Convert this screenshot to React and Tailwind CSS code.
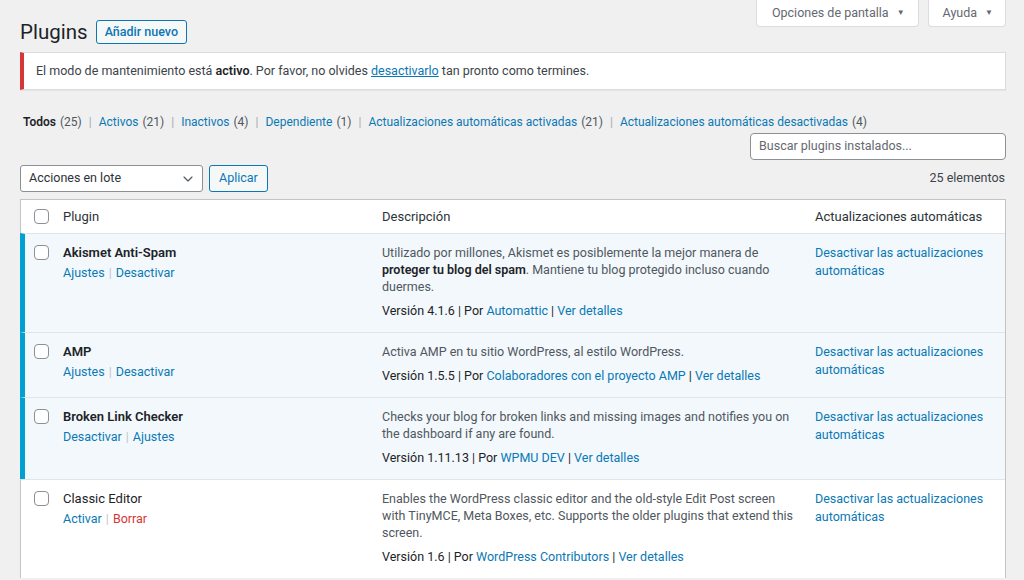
import { ChevronDown } from "lucide-react"

const LINK = "text-[#0a78b4]"

const filters = [
  { label: "Todos", count: 25, current: true },
  { label: "Activos", count: 21 },
  { label: "Inactivos", count: 4 },
  { label: "Dependiente", count: 1 },
  { label: "Actualizaciones automáticas activadas", count: 21 },
  { label: "Actualizaciones automáticas desactivadas", count: 4 },
]

const plugins = [
  {
    name: "Akismet Anti-Spam",
    active: true,
    actions: ["Ajustes", "Desactivar"],
    desc: (
      <>
        Utilizado por millones, Akismet es posiblemente la mejor manera de{" "}
        <strong className="font-semibold text-[#1d2327]">proteger tu blog del spam</strong>. Mantiene tu blog protegido
        incluso cuando duermes.
      </>
    ),
    version: "4.1.6",
    author: "Automattic",
  },
  {
    name: "AMP",
    active: true,
    actions: ["Ajustes", "Desactivar"],
    desc: "Activa AMP en tu sitio WordPress, al estilo WordPress.",
    version: "1.5.5",
    author: "Colaboradores con el proyecto AMP",
  },
  {
    name: "Broken Link Checker",
    active: true,
    actions: ["Desactivar", "Ajustes"],
    desc: "Checks your blog for broken links and missing images and notifies you on the dashboard if any are found.",
    version: "1.11.13",
    author: "WPMU DEV",
  },
  {
    name: "Classic Editor",
    active: false,
    actions: ["Activar", "Borrar"],
    desc: "Enables the WordPress classic editor and the old-style Edit Post screen with TinyMCE, Meta Boxes, etc. Supports the older plugins that extend this screen.",
    version: "1.6",
    author: "WordPress Contributors",
  },
]

function Checkbox() {
  return <span className="block w-[15px] h-[15px] rounded-[4px] border border-[#8c8f94] bg-white" />
}

function PluginRow({ p }) {
  return (
    <div
      className={`flex border-t border-t-[#e2e4e7] ${
        p.active ? "bg-[#f2f8fc] border-l-[5px] border-l-[#00a0d2]" : "bg-white border-l border-l-[#c3c4c7]"
      }`}
    >
      <div className={`${p.active ? "w-[37px] pl-[9px]" : "w-[41px] pl-[13px]"} shrink-0 pt-[11px]`}>
        <Checkbox />
      </div>
      <div className="w-[320px] shrink-0 pl-[1px] pt-[10px]">
        <div
          className={`text-[13px] leading-[17px] text-[#1d2327] ${p.active ? "font-semibold" : "font-normal"}`}
        >
          {p.name}
        </div>
        <div className="mt-[3px] text-[12.5px] leading-[17px] text-[#c3c4c7]">
          <span className={LINK}>{p.actions[0]}</span>
          <span className="mx-[4px]">|</span>
          <span className={p.actions[1] === "Borrar" ? "text-[#d63638]" : LINK}>{p.actions[1]}</span>
        </div>
      </div>
      <div className="w-[433px] shrink-0 pt-[10px] pb-[13px] pr-[20px] text-[12.5px] leading-[17px]">
        <div className="text-[#50575e]">{p.desc}</div>
        <div className="mt-[7px] text-[#1d2327]">
          Versión {p.version} | Por <span className={LINK}>{p.author}</span> |{" "}
          <span className={LINK}>Ver detalles</span>
        </div>
      </div>
      <div className={`flex-1 pt-[10px] pr-[10px] text-[12.5px] leading-[17.5px] ${LINK}`}>
        Desactivar las actualizaciones automáticas
      </div>
    </div>
  )
}

export default function App() {
  return (
    <div
      className="min-h-[580px] bg-[#f0f0f1] text-[12.5px] text-[#3c434a] pl-[20px] pr-[18px]"
      style={{ fontFamily: "Roboto, 'Noto Sans', sans-serif" }}
    >
      {/* screen meta tabs */}
      <div className="flex justify-end gap-[9px]">
        <div className="h-[27px] pl-[15px] pr-[13px] flex items-center gap-[8px] bg-white border border-t-0 border-[#dcdcde] rounded-b-[4px] text-[#646970] text-[12.5px]">
          Opciones de pantalla <span className="text-[8px]">▼</span>
        </div>
        <div className="h-[27px] pl-[14px] pr-[12px] flex items-center gap-[8px] bg-white border border-t-0 border-[#dcdcde] rounded-b-[4px] text-[#646970] text-[12.5px]">
          Ayuda <span className="text-[8px]">▼</span>
        </div>
      </div>

      <div className="flex items-center gap-[8px] -mt-[9px]">
        <h1 className="text-[20.5px] leading-[28px] text-[#1d2327] font-normal">Plugins</h1>
        <span className="h-[24px] px-[8px] flex items-center border border-[#0a78b4] rounded-[3px] text-[#0a78b4] text-[12.5px] font-medium bg-[#f6f7f7]">
          Añadir nuevo
        </span>
      </div>

      {/* notice */}
      <div className="mt-[6px] h-[38px] flex items-center bg-white border border-[#dcdcde] border-l-4 border-l-[#d63638] pl-[12px] text-[12.5px] text-[#3c434a] shadow-[0_1px_1px_rgba(0,0,0,0.04)]">
        <span>
          El modo de mantenimiento está <strong className="font-semibold text-[#1d2327]">activo</strong>. Por favor, no
          olvides <span className={`${LINK} underline`}>desactivarlo</span> tan pronto como termines.
        </span>
      </div>

      {/* filters */}
      <div className="mt-[23px] ml-[3px] flex flex-wrap text-[12px] leading-[18px] text-[#50575e]">
        {filters.map((f, i) => (
          <span key={f.label} className="flex">
            {i > 0 && <span className="mx-[7px] text-[#a7aaad]">|</span>}
            <span className={f.current ? "font-semibold text-[#1d2327]" : LINK}>{f.label}</span>
            <span className="ml-[4px]">({f.count})</span>
          </span>
        ))}
      </div>

      <div className="flex justify-end mt-[2px]">
        <div className="w-[256px] h-[27px] bg-white border border-[#8c8f94] rounded-[4px] flex items-center px-[8px] text-[12.5px] text-[#646970]">
          Buscar plugins instalados...
        </div>
      </div>

      {/* bulk actions */}
      <div className="mt-[5px] flex items-center">
        <div className="w-[183px] h-[27px] bg-white border border-[#8c8f94] rounded-[3px] flex items-center justify-between pl-[8px] pr-[6px] text-[12.5px] text-[#2c3338]">
          Acciones en lote
          <ChevronDown size={16} strokeWidth={1.75} className="text-[#50575e]" />
        </div>
        <span className="ml-[6px] h-[27px] px-[9px] flex items-center border border-[#0a78b4] rounded-[3px] bg-[#f6f7f7] text-[#0a78b4] text-[12.5px]">
          Aplicar
        </span>
        <span className="ml-auto text-[12.5px] text-[#3c434a] pr-[1px]">25 elementos</span>
      </div>

      {/* table */}
      <div className="mt-[7px] border-r border-t border-[#c3c4c7] bg-white">
        <div className="flex items-center h-[33px] border-l border-[#c3c4c7] text-[13px] text-[#2c3338]">
          <div className="w-[41px] pl-[13px] shrink-0">
            <Checkbox />
          </div>
          <div className="w-[320px] shrink-0 pl-[1px]">Plugin</div>
          <div className="w-[433px] shrink-0">Descripción</div>
          <div className="flex-1">Actualizaciones automáticas</div>
        </div>
        {plugins.map((p) => (
          <PluginRow key={p.name} p={p} />
        ))}
      </div>
    </div>
  )
}
